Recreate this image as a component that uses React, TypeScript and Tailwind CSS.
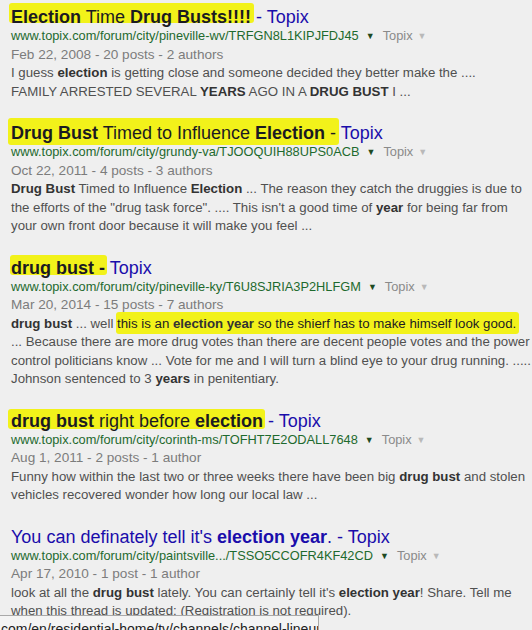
import React from 'react';

const Mark = ({ children, className = '' }: { children: React.ReactNode; className?: string }) => (
    <span className="relative inline-block">
        <span className={`absolute bg-[#f2f21a] rounded-[3px] -z-0 ${className}`} />
        <span className="relative text-[#1b1a22]">{children}</span>
    </span>
);

const B = ({ children }: { children: React.ReactNode }) => <b className="font-bold text-[#333]">{children}</b>;

function Result({ title, url, date, children }: { title: React.ReactNode; url: string; date: string; children: React.ReactNode }) {
    return (
        <div className="mb-[23px]">
            <div className="text-[18px] leading-[19px] text-[#1a0dab] whitespace-nowrap">{title}</div>
            <div className="text-[12.8px] leading-[18.5px] whitespace-nowrap flex items-center">
                <span className="text-[#1e6a2e]">{url}</span>
                <span className="text-[#1e4a22] text-[9px] ml-[7px]">▼</span>
                <span className="text-[#8a8a8a] ml-[8px]">Topix</span>
                <span className="text-[#b9b9b9] text-[9px] ml-[5px]">▼</span>
            </div>
            <div className="text-[13.6px] leading-[18.5px] text-[#7c7c7c]">{date}</div>
            <div className="text-[13.25px] leading-[18.5px] text-[#505050] whitespace-nowrap">{children}</div>
        </div>
    );
}

export default function App() {
    return (
        <div className="relative h-[630px] w-[532px] overflow-hidden bg-[#efefef] font-['Liberation_Sans',Arial,sans-serif]">
            <div className="pl-[11px] pt-[8px] isolate">
                <Result
                    title={<><Mark className="left-[-2px] right-[-3px] top-[-5px] bottom-[4px]"><b>Election</b> Time <b>Drug Busts!!!!</b></Mark> - Topix</>}
                    url="www.topix.com/forum/city/pineville-wv/TRFGN8L1KIPJFDJ45"
                    date="Feb 22, 2008 - 20 posts - 2 authors"
                >
                    I guess <B>election</B> is getting close and someone decided they better make the ....<br />
                    FAMILY ARRESTED SEVERAL <B>YEARS</B> AGO IN A <B>DRUG BUST</B> I ...
                </Result>

                <Result
                    title={<><Mark className="left-[-3px] right-[-3px] top-[-6px] bottom-[-2px]"><b>Drug Bust</b> Timed to Influence <b>Election</b> -</Mark> Topix</>}
                    url="www.topix.com/forum/city/grundy-va/TJOOQUIH88UPS0ACB"
                    date="Oct 22, 2011 - 4 posts - 3 authors"
                >
                    <B>Drug Bust</B> Timed to Influence <B>Election</B> ... The reason they catch the druggies is due to<br />
                    the efforts of the "drug task force". .... This isn't a good time of <B>year</B> for being far from<br />
                    your own front door because it will make you feel ...
                </Result>

                <Result
                    title={<><Mark className="left-[-1px] right-[-2px] top-[-4px] bottom-[3px]"><b>drug bust -</b></Mark> Topix</>}
                    url="www.topix.com/forum/city/pineville-ky/T6U8SJRIA3P2HLFGM"
                    date="Mar 20, 2014 - 15 posts - 7 authors"
                >
                    <B>drug bust</B> ... well <Mark className="left-[-1px] right-[-3px] top-[-3px] bottom-[-1px]">this is an <B>election year</B> so the shierf has to make himself look good.</Mark><br />
                    ... Because there are more drug votes than there are decent people votes and the power<br />
                    control politicians know ... Vote for me and I will turn a blind eye to your drug running. .....<br />
                    Johnson sentenced to 3 <B>years</B> in penitentiary.
                </Result>

                <Result
                    title={<><Mark className="left-[-3px] right-[-2px] top-[-3px] bottom-[2px]"><b>drug bust</b> right before <b>election</b></Mark> - Topix</>}
                    url="www.topix.com/forum/city/corinth-ms/TOFHT7E2ODALL7648"
                    date="Aug 1, 2011 - 2 posts - 1 author"
                >
                    Funny how within the last two or three weeks there have been big <B>drug bust</B> and stolen<br />
                    vehicles recovered wonder how long our local law ...
                </Result>

                <Result
                    title={<>You can definately tell it's <b>election year</b>. - Topix</>}
                    url="www.topix.com/forum/city/paintsville.../TSSO5CCOFR4KF42CD"
                    date="Apr 17, 2010 - 1 post - 1 author"
                >
                    look at all the <B>drug bust</B> lately. You can certainly tell it's <B>election year</B>! Share. Tell me<br />
                    when this thread is updated: (Registration is not required).
                </Result>
            </div>

            <div className="absolute left-0 top-[615px] h-[20px] w-[319px] bg-[#f4f4f4] border-t border-r border-[#a9a9a9] text-[14px] leading-[20px] pt-[3px] text-[#222] whitespace-nowrap overflow-hidden pl-[1px]">
                com/en/residential-home/tv/channels/channel-lineup.html
            </div>
        </div>
    );
}
